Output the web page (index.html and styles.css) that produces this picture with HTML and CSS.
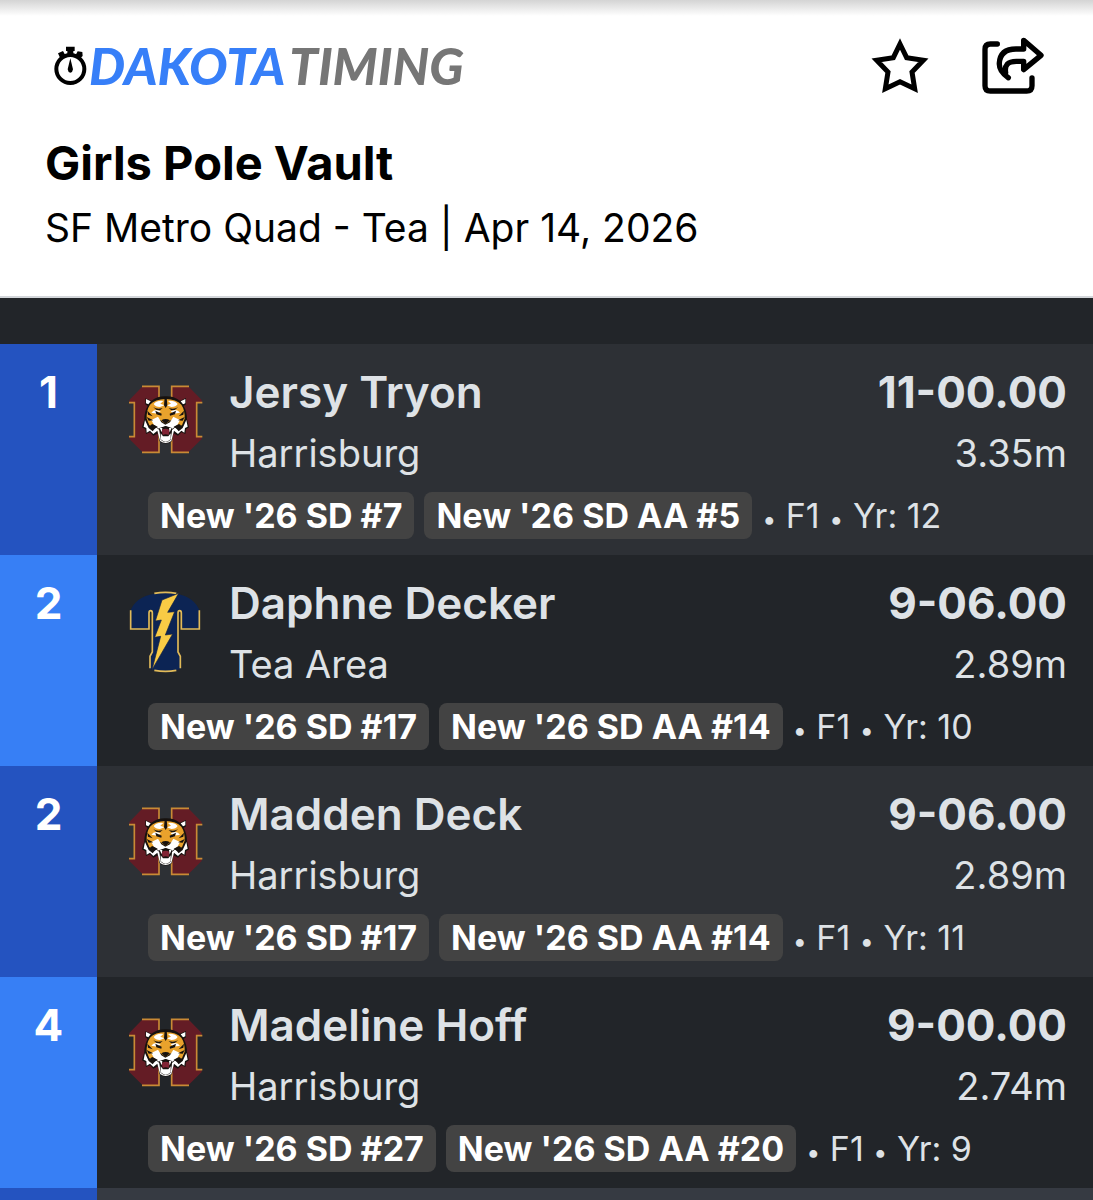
FILE: index.html
```html
<!DOCTYPE html>
<html lang="en">
<head>
<meta charset="UTF-8">
<title>Girls Pole Vault - Dakota Timing</title>
<meta name="viewport" content="width=device-width, initial-scale=1.0">
<link rel="stylesheet" href="styles.css">
</head>
<body>

  <svg class="sprite" aria-hidden="true">
    <symbol id="harrisburg" viewBox="0 0 270 300">
      <path fill="#641c25" d="M68 49H117V247H68L28 207V200H43V98H28V90Z M155 49H205L245 90V98H230V200H245V207L205 247H155Z"/>
      <path fill="none" stroke="#c98a35" stroke-width="5" d="M66 49H117V247H66 M207 49H155V247H207 M27 98H43V200H27 M247 98H230V200H247"/>
      <path fill="#17120f" d="M76 85L94 92Q114 78 137 79Q160 78 180 92L198 84L198 103L191 108Q201 125 201 148L207 172L198 178L196 192L184 187L174 197L160 190L156 213Q137 228 118 213L114 190L100 197L90 187L78 192L76 178L66 172L73 148Q73 125 83 108L76 103Z"/>
      <path fill="#fff" d="M78 87L92 94L85 103L78 100Z M196 87L182 94L189 103L196 100Z M75 150L86 174L98 184L108 172L118 180L122 209Q137 222 152 209L156 180L166 172L176 184L188 174L199 150L203 170L195 174L193 188L184 182L174 192L162 182L154 213Q137 225 120 213L112 182L100 192L90 182L80 188L79 174L71 170Z"/>
      <path fill="#e9a22c" d="M90 104Q105 88 137 87Q169 88 184 104Q195 120 194 146L186 166L172 168L154 150L137 161L120 150L102 168L88 166L80 146Q79 120 90 104Z"/>
      <path fill="#fff" d="M101 102Q112 90 130 93L121 101L133 106L120 111Q106 111 101 102Z M173 102Q162 90 144 93L153 101L141 106L154 111Q168 111 173 102Z M94 128Q103 114 122 124L113 131Z M180 128Q171 114 152 124L161 131Z M94 150L114 140L124 157L136 164L150 157L160 140L180 150L172 165L157 176L137 169L117 176L102 165Z"/>
      <path fill="#17120f" d="M134 82H140L142 106L137 114L132 106Z M100 112Q112 119 128 114L120 121Q108 122 100 112Z M174 112Q162 119 146 114L154 121Q166 122 174 112Z M106 122L125 131L124 137L109 133Z M168 122L149 131L150 137L165 133Z M124 151Q137 143 150 151L137 162Z M82 122L98 139L84 134Z M192 122L176 139L190 134Z M80 141L100 151L86 152Z M194 141L174 151L188 152Z M97 162L113 170L104 176L91 166Z M177 162L161 170L170 176L183 166Z M118 174L137 168L156 174L152 201Q137 209 122 201Z"/>
      <path fill="#812334" d="M125 180Q137 172 149 180L146 195Q137 190 128 195Z"/>
      <path fill="#fff" d="M119 173L127 174L125 187Z M155 173L147 174L149 187Z M122 190L129 199H145L152 190L152 208Q137 222 122 208Z"/>
    </symbol>
    <symbol id="tea-area" viewBox="0 0 270 300">
      <path fill="#0c2454" d="M31 90Q46 48 103 38Q137 30 169 38Q224 48 239 90V145H184V91H175V213L182 224V264Q137 279 89 264V225L97 213V91H87V145H31Z"/>
      <path fill="none" stroke="#e1ba58" stroke-width="5" d="M32 88V144H87V96Q87 89 92 89Q97 89 97 96V213L90 226V262 M238 88V144H184V96Q184 89 179 89Q174 89 174 96V213L181 226V262 M103 37Q137 31 169 37 M103 268Q137 274 169 268"/>
      <path fill="#f9cb45" stroke="#102044" stroke-width="2" d="M176 37L126 57L106 120L124 117L104 169L122 166L96 266L158 159L136 162L164 92L143 94Z"/>
    </symbol>
  </svg>

  <header>
    <div class="topbar">
      <a class="brand" href="#">
        <svg class="stopwatch" viewBox="42 50 99 120" aria-hidden="true">
          <circle cx="91" cy="119" r="42" fill="none" stroke="#000" stroke-width="12"/>
          <path d="M78 52H104V65H100V77H82V65H78Z M54 72L69 65L76 78L62 90Z M113 66L127 68L128 80L119 88L107 77Z M91 87L99 120Q98 129 91 130Q84 129 83 120Z"/>
        </svg>
        <span class="brand-name"><span class="brand-first">DAKOTA</span><span class="brand-last">TIMING</span></span>
      </a>
      <div class="actions">
        <button type="button" aria-label="Add to favorites">
          <svg viewBox="20 24 198 198" aria-hidden="true">
            <path fill="none" stroke="#000" stroke-width="15" d="M119 57L139 98L189 106L155 141L163 191L119 170L75 191L83 141L49 106L99 98Z"/>
          </svg>
        </button>
        <button type="button" aria-label="Share">
          <svg viewBox="360 24 198 198" aria-hidden="true">
            <g fill="none" stroke="#000" stroke-width="16" stroke-linecap="round" stroke-linejoin="round">
              <path d="M412 57H391Q375 57 375 73V182Q375 198 391 198H500Q516 198 516 182V159"/>
              <path d="M445 158Q416 139 418 114Q421 72 468 72H491V46L543 91L491 134V109H469Q431 109 437 143"/>
            </g>
          </svg>
        </button>
      </div>
    </div>
    <h1>Girls Pole Vault</h1>
    <p class="meet">SF Metro Quad - Tea | Apr 14, 2026</p>
  </header>

  <main>
    <table class="results" aria-label="Results">
      <tbody>
        <tr>
          <td class="rank" rowspan="2">1</td>
          <td class="team-logo"><svg role="img" aria-label="Harrisburg"><use href="#harrisburg"/></svg></td>
          <td class="athlete"><strong>Jersy Tryon</strong><span>Harrisburg</span></td>
          <td class="mark"><strong>11-00.00</strong><span>3.35m</span></td>
        </tr>
        <tr>
          <td class="details" colspan="3">
            <div class="detail-row"><span class="badge">New '26 SD #7</span><span class="badge">New '26 SD AA #5</span><span class="info"><span class="dot">•</span> F1 <span class="dot">•</span> Yr: 12</span></div>
          </td>
        </tr>
      </tbody>
      <tbody>
        <tr>
          <td class="rank" rowspan="2">2</td>
          <td class="team-logo"><svg role="img" aria-label="Tea Area"><use href="#tea-area"/></svg></td>
          <td class="athlete"><strong>Daphne Decker</strong><span>Tea Area</span></td>
          <td class="mark"><strong>9-06.00</strong><span>2.89m</span></td>
        </tr>
        <tr>
          <td class="details" colspan="3">
            <div class="detail-row"><span class="badge">New '26 SD #17</span><span class="badge">New '26 SD AA #14</span><span class="info"><span class="dot">•</span> F1 <span class="dot">•</span> Yr: 10</span></div>
          </td>
        </tr>
      </tbody>
      <tbody>
        <tr>
          <td class="rank" rowspan="2">2</td>
          <td class="team-logo"><svg role="img" aria-label="Harrisburg"><use href="#harrisburg"/></svg></td>
          <td class="athlete"><strong>Madden Deck</strong><span>Harrisburg</span></td>
          <td class="mark"><strong>9-06.00</strong><span>2.89m</span></td>
        </tr>
        <tr>
          <td class="details" colspan="3">
            <div class="detail-row"><span class="badge">New '26 SD #17</span><span class="badge">New '26 SD AA #14</span><span class="info"><span class="dot">•</span> F1 <span class="dot">•</span> Yr: 11</span></div>
          </td>
        </tr>
      </tbody>
      <tbody>
        <tr>
          <td class="rank" rowspan="2">4</td>
          <td class="team-logo"><svg role="img" aria-label="Harrisburg"><use href="#harrisburg"/></svg></td>
          <td class="athlete"><strong>Madeline Hoff</strong><span>Harrisburg</span></td>
          <td class="mark"><strong>9-00.00</strong><span>2.74m</span></td>
        </tr>
        <tr>
          <td class="details" colspan="3">
            <div class="detail-row"><span class="badge">New '26 SD #27</span><span class="badge">New '26 SD AA #20</span><span class="info"><span class="dot">•</span> F1 <span class="dot">•</span> Yr: 9</span></div>
          </td>
        </tr>
      </tbody>
      <tbody class="next">
        <tr>
          <td class="rank"></td>
          <td colspan="3"></td>
        </tr>
      </tbody>
    </table>
  </main>

</body>
</html>
```
FILE: styles.css
```css
* {
  box-sizing: border-box;
}
body {
  margin: 0;
  background-color: #222529;
  color: #dee2e6;
  font-family: Inter, "Liberation Sans", sans-serif;
}
.sprite {
  display: none;
}
header {
  padding: 33px 47px 38px 45px;
  background: #fff linear-gradient(#d4d4d4, #fff) no-repeat top / 100% 16px;
  border-bottom: 2px solid #d3d6da;
  color: #000;
}
.topbar {
  display: flex;
  align-items: center;
  justify-content: space-between;
  margin-bottom: 36px;
}
.brand {
  display: flex;
  align-items: center;
  gap: 2px;
  padding-left: 9px;
  text-decoration: none;
}
.stopwatch {
  width: 33px;
  height: 40px;
}
.brand-name {
  display: flex;
  gap: 4px;
  font-family: "Lato Black", Lato, sans-serif;
  font-size: 51px;
  font-style: italic;
  font-weight: 900;
  line-height: 66px;
}
.brand-first {
  color: #377ff8;
}
.brand-last {
  color: #767676;
}
.actions {
  display: flex;
  gap: 47px;
}
.actions button {
  padding: 0;
  border: 0;
  background: none;
  cursor: pointer;
}
.actions svg {
  display: block;
  width: 66px;
  height: 66px;
}
h1 {
  margin: 0;
  font-size: 47px;
  font-weight: 700;
  line-height: 56px;
}
.meet {
  margin: 7px 0 0;
  font-size: 39px;
  line-height: 60px;
}
main {
  padding-top: 46px;
}
.results {
  width: 100%;
  border-collapse: collapse;
}
.results td {
  padding: 0;
  vertical-align: top;
}
.results tbody:nth-child(odd) {
  background-color: #2d3035;
}
.results .rank {
  width: 97px;
  padding-top: 18px;
  background-color: #377ff5;
  color: #fff;
  font-size: 44px;
  font-weight: 700;
  line-height: 61px;
  text-align: center;
}
.results tbody:nth-child(odd) .rank {
  background-color: #2453c0;
}
.results .team-logo {
  width: 132px;
  padding: 26px 0 0 23px;
}
.team-logo svg {
  display: block;
  width: 90px;
  height: 100px;
}
.results .athlete,
.results .mark {
  padding-top: 18px;
  font-size: 38px;
  line-height: 61px;
}
.results .mark {
  padding-right: 26px;
  text-align: right;
}
.athlete strong,
.mark strong {
  display: block;
  font-size: 44px;
  font-weight: 600;
}
.mark strong {
  font-weight: 700;
}
.athlete span,
.mark span {
  display: block;
}
.results .details {
  padding: 8px 26px 16px 51px;
}
.detail-row {
  display: flex;
  align-items: center;
  gap: 10px;
  line-height: 47px;
  white-space: nowrap;
}
.badge {
  padding: 0 12px;
  border-radius: 8px;
  background-color: #434343;
  color: #fff;
  font-size: 34px;
  font-weight: 700;
}
.info {
  font-size: 34px;
}
.dot {
  font-size: 25px;
  line-height: 1;
}
.results .next .rank {
  height: 12px;
  padding: 0;
}
.results tbody.next {
  background-color: #363a42;
}
```
